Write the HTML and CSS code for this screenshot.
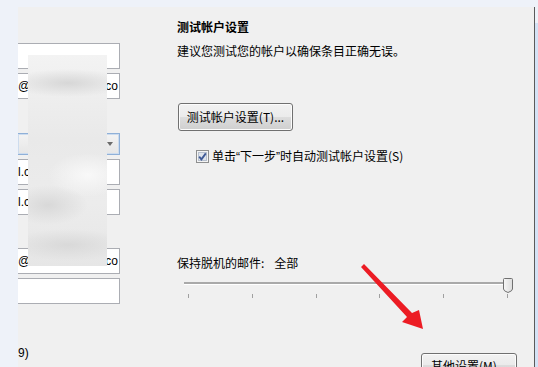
FILE: index.html
```html
<!DOCTYPE html>
<html lang="zh-CN">
<head>
  <meta charset="UTF-8" />
  <meta name="viewport" content="width=device-width, initial-scale=1.0"/>
  <title>帐户设置</title>
  <link rel="stylesheet" href="styles.css">
</head>
<body>
  <div class="screen">
    <div class="window">

      <div class="left">
        <div class="field"></div>
        <div class="field"><span>@1</span><span>co</span></div>
        <div class="combo gap-lg"><span class="caret"></span></div>
        <div class="field"><span>l.c</span></div>
        <div class="field"><span>l.c</span></div>
        <div class="field gap-lg"><span>@1</span><span>co</span></div>
        <div class="field"></div>
        <div class="note">9)</div>
      </div>

      <div class="right">
        <div class="title">测试帐户设置</div>
        <p class="desc">建议您测试您的帐户以确保条目正确无误。</p>

        <button class="btn btn-test" type="button">测试帐户设置(T)...</button>

        <label class="check">
          <svg class="box" width="13" height="13" viewBox="0 0 13 13">
            <rect x="0.5" y="0.5" width="12" height="12" fill="#f4f4f4" stroke="#8e8f8f"/>
            <rect x="2.5" y="2.5" width="8" height="8" fill="#dfe4ec" stroke="#b8c1cf"/>
            <path d="M3.2 6.6 L5.4 9.4 L9.8 3.4" fill="none" stroke="#3f5a96" stroke-width="1.8"/>
          </svg>
          <span>单击<span class="q">“</span>下一步<span class="q">”</span>时自动测试帐户设置(S)</span>
        </label>

        <div class="offline">保持脱机的邮件:<span class="value">全部</span></div>

        <div class="slider">
          <div class="track"></div>
          <div class="ticks">
            <i></i><i></i><i></i><i></i><i></i><i></i>
          </div>
          <svg class="thumb" width="10" height="15" viewBox="0 0 10 15">
            <defs>
              <linearGradient id="tg" x1="0" y1="0" x2="1" y2="0">
                <stop offset="0" stop-color="#f7f7f7"/>
                <stop offset="1" stop-color="#dcdcdc"/>
              </linearGradient>
            </defs>
            <path d="M0.5 1.5 Q0.5 0.5 1.5 0.5 L8.5 0.5 Q9.5 0.5 9.5 1.5 L9.5 11 Q9.5 13 5 14.5 Q0.5 13 0.5 11 Z" fill="url(#tg)" stroke="#707070"/>
          </svg>
        </div>

        <button class="btn btn-more" type="button">其他设置(M)...</button>
      </div>

    </div>
    <div class="edge"></div>
  </div>

  <div class="smudge"></div>

  <svg class="arrow" width="538" height="367" viewBox="0 0 538 367">
    <polygon points="361,267 364,264 412,313 419,310 423,329 402,322 407,317" fill="#ec1c24"/>
  </svg>
</body>
</html>
```

FILE: styles.css
```css
* {
  box-sizing: border-box;
}
html, body {
  margin: 0;
  padding: 0;
}
body {
  width: 538px;
  height: 367px;
  overflow: hidden;
  background: #eef2f9;
  font-family: "Noto Sans CJK SC", "Noto Sans", sans-serif;
  font-size: 12px;
  line-height: 16px;
  color: #000;
  position: relative;
}
.screen {
  display: flex;
  height: 367px;
}
.window {
  display: flex;
  width: 517px;
  margin: 7px 0 0 18px;
  background: #f0f0f0;
  border-right: 1px solid #5a5a5a;
  height: 360px;
}
.edge {
  width: 3px;
  background: linear-gradient(#eef2f9 0 23px, #d3e2f5 23px);
}

/* left column, clipped */
.left {
  width: 102px;
  padding-top: 36px;
  display: flex;
  flex-direction: column;
  gap: 4px;
  overflow: hidden;
}
.left > * {
  flex: none;
}
.field {
  height: 26px;
  background: #fff;
  border: 1px solid #abadb3;
  border-left: none;
  display: flex;
  align-items: center;
  justify-content: space-between;
  padding-right: 1px;
  font-family: "Liberation Sans", "Noto Sans", sans-serif;
}
.combo {
  height: 22px;
  border: 1px solid #8fb0d8;
  border-left: none;
  box-shadow: inset 0 0 0 1px #cddcee;
  background: linear-gradient(#f3f3f3, #e6e6e6);
  position: relative;
}
.caret {
  position: absolute;
  right: 6px;
  top: 8px;
  border-left: 3px solid transparent;
  border-right: 3px solid transparent;
  border-top: 4px solid #6b6b6b;
}
.gap-lg {
  margin-top: 29px;
}
.left .combo.gap-lg {
  margin-top: 30px;
}
.note {
  margin-top: 37px;
  font-family: "Liberation Sans", "Noto Sans", sans-serif;
}

/* right column */
.right {
  margin-left: 57px;
  width: 357px;
  padding-top: 12px;
  display: flex;
  flex-direction: column;
  align-items: flex-start;
}
.right > * {
  flex: none;
}
.title {
  font-weight: bold;
}
.desc {
  margin: 8px 0 0;
}
.btn {
  font: inherit;
  color: #000;
  border: 1px solid #707070;
  border-radius: 3px;
  background: linear-gradient(#f2f2f2 0%, #ebebeb 50%, #dddddd 51%, #cfcfcf 100%);
  box-shadow: inset 0 0 0 1px #fcfcfc;
  padding: 0;
}
.btn-test {
  margin: 44px 0 0 1px;
  width: 115px;
  height: 28px;
}
.check {
  display: flex;
  align-items: center;
  gap: 3px;
  margin: 17px 0 0 19px;
}
.check .box {
  flex: none;
}
.q {
  font-family: "Liberation Sans", sans-serif;
}
.offline {
  margin-top: 90px;
}
.offline .value {
  margin-left: 10px;
}
.slider {
  position: relative;
  margin: 7px 0 0 7px;
  width: 330px;
  height: 21px;
}
.track {
  margin-top: 4px;
  width: 324px;
  height: 2px;
  background: #a9a9a9;
  border-bottom: 1px solid #fff;
  box-sizing: content-box;
}
.ticks {
  margin: 9px 0 0 4px;
  width: 320px;
  display: flex;
  justify-content: space-between;
}
.ticks i {
  width: 1px;
  height: 4px;
  background: #a0a0a0;
}
.thumb {
  position: absolute;
  left: 319px;
  top: 0;
}
.btn-more {
  align-self: flex-end;
  margin: 54px 17px 0 0;
  width: 96px;
  height: 23px;
  padding-top: 2px;
}

/* blurred-out personal data */
.smudge {
  position: absolute;
  left: 28px;
  top: 55px;
  width: 79px;
  height: 211px;
  background:
    radial-gradient(ellipse 60px 14px at 40px 28px, rgba(212,212,212,0.9), transparent),
    radial-gradient(ellipse 40px 20px at 20px 150px, rgba(214,214,214,0.9), transparent),
    radial-gradient(ellipse 40px 22px at 60px 120px, rgba(250,250,250,0.9), transparent),
    radial-gradient(ellipse 60px 16px at 40px 190px, rgba(215,215,215,0.9), transparent),
    linear-gradient(#f3f3f3, #e9e9e9 40%, #ececec 70%, #e6e6e6);
}
.arrow {
  position: absolute;
  left: 0;
  top: 0;
  pointer-events: none;
}
```
